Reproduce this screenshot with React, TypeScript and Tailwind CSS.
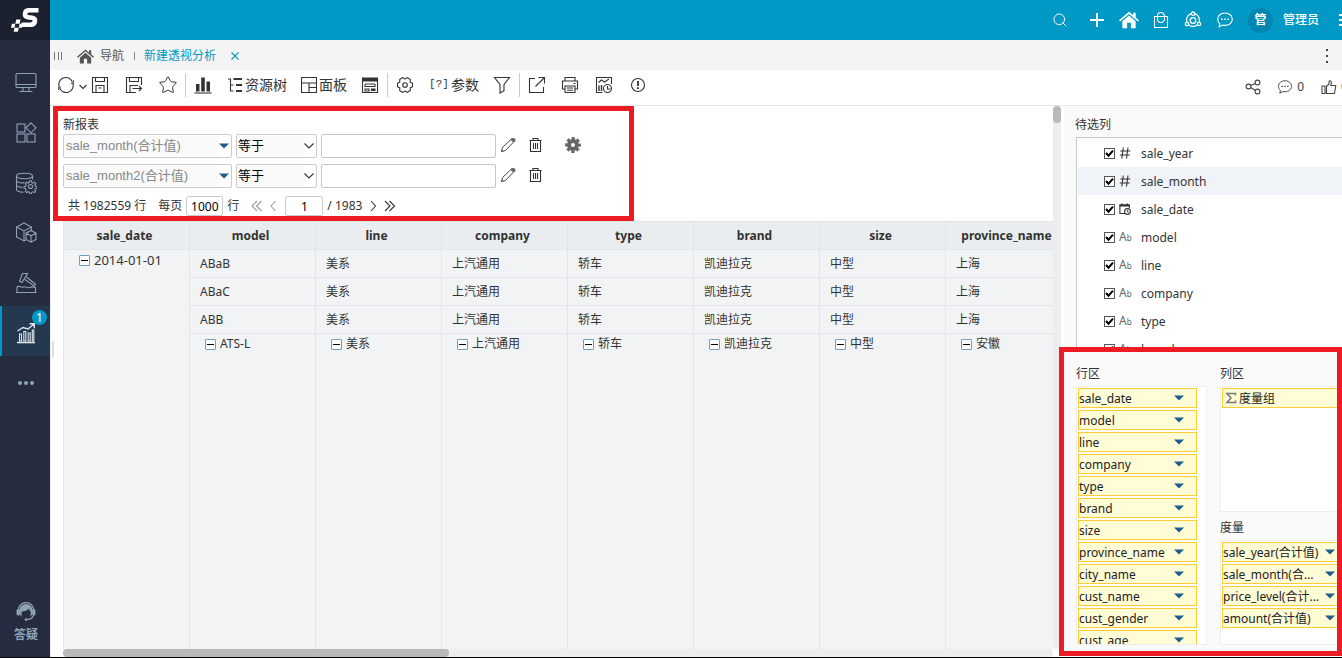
import type { ReactNode } from "react";
import clsx from "clsx";
import { Search, Star } from "lucide-react";

type IconProps = { children: ReactNode; box?: number; className?: string; sw?: number };

function Icon({ children, box = 18, className = "size-[18px]", sw = 1.1 }: IconProps) {
  return (
    <svg viewBox={`0 0 ${box} ${box}`} className={clsx("shrink-0", className)} fill="none" stroke="currentColor" strokeWidth={sw} aria-hidden="true">
      {children}
    </svg>
  );
}

const HomeIcon = ({ className }: { className: string }) => (
  <Icon className={className}>
    <path d="M9 1.5 0 9.3l1 1.1 8-6.9 8 6.9 1-1.1-3-2.6V2.5h-2.3v2.2zM3 10.200V16.500h4.300V11.500h3.400v5H15v-6.300L9 5z" fill="currentColor" stroke="none" />
  </Icon>
);

const ChatIcon = ({ className }: { className?: string }) => (
  <Icon className={className}>
    <path d="M9 2c4.300 0 7.300 2.700 7.300 6.200S13.300 14.400 9 14.400c-.9 0-1.700-.1-2.500-.3L3.200 16l.6-3.200C2.400 11.700 1.700 10 1.700 8.200 1.700 4.700 4.700 2 9 2z" />
    <path d="M5 7.600h1.600v1.500H5zM8.200 7.600h1.600v1.500H8.200zM11.400 7.600H13v1.500h-1.600z" fill="currentColor" stroke="none" />
  </Icon>
);

const Caret = () => (
  <svg viewBox="0 0 10 6" className="h-1.5 w-2.5 shrink-0" aria-hidden="true">
    <path d="M0 .5h10L5 5.500z" fill="#1c5d8c" />
  </svg>
);

const sideItems = [
  {
    label: "大屏",
    icon: <><rect x="1" y="1.500" width="20" height="14" rx="1" /><path d="M1 12.500h20M8 15.500v3.500m6-3.500v3.500M4.500 19.500h13" /></>,
  },
  {
    label: "应用",
    icon: <><rect x="2" y="2" width="8" height="8" /><rect x="2" y="12" width="8" height="8" /><rect x="12" y="12" width="8" height="8" /><path d="m16 .8 5 5-5 5-5-5z" /></>,
  },
  {
    label: "数据源",
    icon: <><ellipse cx="9.500" cy="4" rx="8" ry="2.700" /><path d="M1.500 4v13.500c0 1.500 3 2.600 7 2.800M17.500 4v3.500M1.500 8.500c.3 1.400 3.500 2.500 8 2.400M1.500 13c.2 1.300 2.700 2.300 6 2.500" /><circle cx="15.500" cy="14.500" r="2" /><path d="m14.600 8.800 1.800 0 .4 1.700 1.300.6 1.500-.9 1.200 1.300-.9 1.500.5 1.300 1.600.4v1.500l-1.700.5-.5 1.200.8 1.500-1.200 1.200-1.500-.8-1.200.5-.4 1.500h-1.700l-.4-1.600-1.300-.5-1.500.9-1.100-1.200.8-1.500-.5-1.200-1.500-.5v-1.500l1.600-.4.5-1.300-.8-1.500 1.100-1.200 1.500.8 1.200-.5z" /></>,
  },
  {
    label: "模型",
    icon: <><path d="m9 1 7.500 4v4M9 1 1.500 5v10L9 19l2-1M1.500 5 9 9l7.500-4M9 9v10" /><path d="m16 8.500 5 2.700v6.300l-5 2.700-5-2.700v-6.300zM11 11.200l5 2.600 5-2.600M16 13.800v6.400" /></>,
  },
  {
    label: "挖掘",
    icon: <><path d="M7.500 1.500h5L7 10.500 4.500 9.200zM11.500 5l9 7.200-1.200 1.800-9.500-6.500" /><path d="M2 20.500V15c2.500-2 4 1 6.500 0s3.500 1.500 6 .5 4-1 6 0v5zM1 20.500h20.500" /></>,
  },
];

function Sidebar() {
  return (
    <nav className="flex w-[50px] shrink-0 flex-col bg-[#262c3f] text-[#8fa3b5]">
      <a href="#" aria-label="Smartbi" className="flex h-10 items-center justify-center bg-[#1c2130]">
        <svg viewBox="0 0 28 26" className="h-[26px] w-7" aria-hidden="true">
          <path d="M27.500 3.300H18.500c-3 0-4.300 1.200-4.500 3.400-.2 2.100.9 3.100 3 3.500l4 .6c2.300.4 3.200 1.500 2.900 3.600s-1.700 3.400-4.400 3.400H10.500" fill="none" stroke="#fff" strokeWidth="4.600" />
          <path d="M5.200 12.500h4.300L8.600 16.800H4.300zM.9 16.800h3.400l-.8 4H0zM8.600 16.800H12l-1 4H7.800zM3.500 20.800h4.300l-.9 4H2.700z" fill="#fff" />
        </svg>
      </a>
      <ul className="mt-4">
        {sideItems.map((item) => (
          <li key={item.label}>
            <button type="button" aria-label={item.label} className="flex h-[50px] w-full items-center justify-center pt-1 pl-0.5">
              <Icon box={22} className="size-[22px]">{item.icon}</Icon>
            </button>
          </li>
        ))}
        <li className="relative">
          <button type="button" aria-label="分析" className="flex h-[50px] w-full items-center justify-center border-l-2 border-[#0099c5] bg-[#243850] text-[#dfe5ea]">
            <Icon box={22} className="mt-1 size-[22px]">
              <path d="M2 20.500h18" strokeWidth="1.600" />
              <path d="M4.500 19v-7h2v7zM8.800 19v-9.500h2V19zM13.200 19v-8h2v8zM17.300 19V8h1.500v11z" />
              <path d="m2.500 9 5.500-3.500 5 1.500L19 2M14.500 1.800h4.800v4.500" strokeWidth="1.400" />
            </Icon>
          </button>
          <span className="absolute top-1 right-[3px] flex size-[15px] items-center justify-center rounded-full bg-[#0099c5] text-xs text-white">1</span>
        </li>
        <li>
          <button type="button" aria-label="更多" className="flex h-[50px] w-full items-center justify-center gap-0.5 pt-1 pl-0.5">
            <span className="size-1 rounded-full bg-current" />
            <span className="size-1 rounded-full bg-current" />
            <span className="size-1 rounded-full bg-current" />
          </button>
        </li>
      </ul>
      <button type="button" className="mt-auto flex flex-col items-center gap-1 pb-3 pl-0.5 text-xs leading-5 font-bold">
        <Icon className="size-5" sw={1.200}>
          <path d="M2 8.500a7 7 0 0 1 14 0" />
          <path d="M9 2.800a6 6 0 0 0-6 6c0 3 .8 4.700 2.500 5.700C4.800 13 4.800 11 5.200 9.500c2.800-.1 5-1 6.600-2.800.2 1.500.8 2.300 1.500 3 .2 1.900-.2 3.500-1 4.800 1.800-1 2.700-2.900 2.700-5.700a6 6 0 0 0-6-6z" fill="currentColor" stroke="none" />
          <rect x=".5" y="7.500" width="3" height="5.500" rx="1.300" fill="currentColor" stroke="none" />
          <rect x="14.500" y="7.500" width="3" height="5.500" rx="1.300" fill="currentColor" stroke="none" />
          <path d="M16 12.500c-.7 2.500-3 4-6 4.200" />
          <circle cx="9" cy="16.700" r="1.200" fill="currentColor" stroke="none" />
        </Icon>
        答疑
      </button>
    </nav>
  );
}

function TopBar() {
  return (
    <header className="flex h-10 shrink-0 items-center justify-end bg-[#0099c5] text-white">
      <button type="button" aria-label="搜索" className="mr-5"><Search className="size-4" strokeWidth={1.400} /></button>
      <div className="flex items-center gap-3.5">
        <button type="button" aria-label="新建"><Icon sw={2}><path d="M9 2v14M2 9h14" /></Icon></button>
        <button type="button" aria-label="首页"><HomeIcon className="-mx-px size-5" /></button>
        <button type="button" aria-label="商城">
          <Icon><path d="M2.500 5.500h13v11h-13zM5.500 9V5a3.500 3.500 0 0 1 7 0v4M5.500 8a3.500 3.500 0 0 0 7 0" /></Icon>
        </button>
        <button type="button" aria-label="社区">
          <Icon sw={1.300}>
            <circle cx="9" cy="9" r="6.500" /><circle cx="9" cy="9.500" r="2.800" />
            <circle cx="9" cy="2.700" r="1.700" fill="#0099c5" /><circle cx="3" cy="13" r="1.700" fill="#0099c5" /><circle cx="15" cy="13" r="1.700" fill="#0099c5" />
          </Icon>
        </button>
        <button type="button" aria-label="消息"><ChatIcon /></button>
      </div>
      <span className="ml-3.5 flex size-[25px] items-center justify-center rounded-full bg-[#0086b0] text-xs font-bold">管</span>
      <button type="button" className="ml-2.5 text-xs font-medium">管理员</button>
      <button type="button" aria-label="菜单" className="ml-5 flex w-[3px] flex-col gap-[3px] overflow-hidden">
        <span className="h-0.5 w-3.5 bg-white" />
        <span className="h-0.5 w-3.5 bg-white" />
        <span className="h-0.5 w-3.5 bg-white" />
      </button>
    </header>
  );
}

function TabBar() {
  return (
    <div className="flex h-[30px] shrink-0 items-center bg-[#f4f4f4] pt-0.5 pl-1 text-xs text-[#555]">
      <span className="flex h-2 w-2 justify-between">
        <span className="w-px bg-[#777]" />
        <span className="w-px bg-[#777]" />
        <span className="w-px bg-[#777]" />
      </span>
      <a href="#" className="ml-[15px] flex items-center gap-1.5">
        <HomeIcon className="size-[17px]" />
        导航
      </a>
      <span className="mr-[9px] ml-2.5 h-2 w-px bg-[#888]" />
      <a href="#" className="text-[#0099c5]">新建透视分析</a>
      <button type="button" aria-label="关闭" className="ml-[15px] text-[#0099c5]">
        <Icon box={8} className="size-2"><path d="m.5.5 7 7m0-7-7 7" /></Icon>
      </button>
      <button type="button" aria-label="更多" className="mr-3.5 ml-auto flex flex-col gap-1">
        <span className="size-0.5 bg-[#444]" />
        <span className="size-0.5 bg-[#444]" />
        <span className="size-0.5 bg-[#444]" />
      </button>
    </div>
  );
}

function Tool({ label, text, divided, children }: { label: string; text?: boolean; divided?: boolean; children: ReactNode }) {
  return (
    <button
      type="button"
      aria-label={label}
      className={clsx("flex h-6 shrink-0 items-center", text ? "gap-0.5 pr-1.5 pl-2 text-sm" : "w-[34px] justify-center", divided && "border-l border-[#ccc]")}
    >
      {children}
      {text && label}
    </button>
  );
}

function Toolbar() {
  return (
    <div className="flex h-9 shrink-0 items-center border-b border-[#e6e6e6] bg-white pb-[5px] pl-[7px] text-[#333]">
      <button type="button" aria-label="刷新" className="flex w-[26px] items-center gap-1">
        <Icon><path d="M2 10.500A7 7 0 0 1 15.500 6.500M16 7.500A7 7 0 0 1 2.500 11.500" /><path d="M16.500 4v3.500h-2.500M1.500 14v-3h2.500" strokeWidth=".8" /></Icon>
        <Icon box={8} className="mt-1 size-2"><path d="m.5 2 3.500 3.500L7.500 2" /></Icon>
      </button>
      <Tool label="保存"><Icon><path d="M1.500 1.500h15v15h-15zM4.500 1.500v4h9v-4M5 16.500v-7h8v7M7.500 12h3" /></Icon></Tool>
      <Tool label="另存为"><Icon><path d="M16.500 9V1.500h-15v15H11M4.500 1.500v4h9v-4M5 16.500v-7h8M7.500 12.500h9M14 10l2.500 2.500L14 15" /></Icon></Tool>
      <Tool label="收藏"><Star className="size-5" strokeWidth={1.200} /></Tool>
      <Tool label="图表" divided>
        <Icon><path d="M2 8h3.500v7.500H2zM7.200 1.500h3.600v14H7.200zM12.500 5.500H16v10h-3.500z" fill="currentColor" stroke="none" /><path d="M.5 17h17" /></Icon>
      </Tool>
      <Tool label="资源树" text>
        <Icon box={16} className="size-4"><path d="M3.500 1.500v13M1 2h3M3.500 8h3M3.500 14h3" /><path d="M6.500 2H15M9 8h6M9 14h6" strokeWidth="2" /></Icon>
      </Tool>
      <Tool label="面板" text>
        <Icon box={16} className="size-4"><path d="M.5.500h15v15H.5zM.5 6h15M8 6v9.500M8 10.500h7.500" /></Icon>
      </Tool>
      <Tool label="表单"><Icon><path d="M1.500 2.500h15v14h-15zM4 8h10M4 8v2.500h10V8M4 13h4v2H4z" /><path d="M1 1.500h16v4H1zM10 12.500h4.500V15H10z" fill="currentColor" stroke="none" /></Icon></Tool>
      <Tool label="设置" divided>
        <Icon>
          <path d="M16.500 7.200v3.600l-2.300 1 .1 2.800-3.100 1.800L9 15l-2.200 1.400-3.100-1.800.1-2.800-2.300-1V7.200l2.300-1-.1-2.800 3.100-1.800L9 3l2.200-1.400 3.100 1.800-.1 2.800z" strokeLinejoin="round" />
          <circle cx="9" cy="9" r="2.300" />
        </Icon>
      </Tool>
      <Tool label="参数" text>
        <span className="w-5 font-['Liberation_Mono',monospace] text-[11px]" aria-hidden="true">[?]</span>
      </Tool>
      <Tool label="筛选"><Icon><path d="M1.500 1.500h15L11 8.500v6.200L7 17V8.500z" /></Icon></Tool>
      <Tool label="导出" divided><Icon><path d="M7 2.500H1.500v14h14V11M10.500 1.500h6v6M16.500 1.500 7.500 10.500" /></Icon></Tool>
      <Tool label="打印">
        <Icon><path d="M4 5V1.500h10V5M4 13H1.500V5h15v8H14M4 10h10v6.500H4zM6 12h6M6 14.300h6M12.500 7.500h2" /></Icon>
      </Tool>
      <Tool label="定时">
        <Icon><path d="M7.500 16.500h-6v-15h15V8M3.500 6.500l3-2.500 3 2 4.500-3" /><path d="M4 15V9.500M6.500 15V9" strokeWidth="1.400" /><circle cx="12.500" cy="12.500" r="4" /><path d="M12.500 10v3h3" /></Icon>
      </Tool>
      <Tool label="提示"><Icon box={16} className="size-4"><circle cx="8" cy="8" r="6.500" /><path d="M8 4v5M8 10.300v1.700" strokeWidth="1.800" /></Icon></Tool>
      <div className="ml-auto flex items-center pt-1 text-xs text-[#444]">
        <button type="button" aria-label="分享">
          <Icon box={16} className="size-4"><circle cx="3.500" cy="7.500" r="2.400" /><circle cx="12.500" cy="3.500" r="2.400" /><circle cx="12.500" cy="12.500" r="2.400" /><path d="m5.700 6.500 4.600-2M5.600 8.600l4.700 2.700" /></Icon>
        </button>
        <button type="button" aria-label="评论" className="ml-4 flex items-center gap-1"><ChatIcon className="size-4" />0</button>
        <button type="button" aria-label="点赞" className="ml-[17px] flex w-[21px] items-center gap-1 overflow-hidden">
          <Icon box={16} className="size-4"><path d="M1 7h3v7.500H1zM5.500 7.500 8 5V2.500c0-1 2-1 2.300.5.200 1.200-.2 2.500-.5 3.500h5l-1.300 8h-8z" /></Icon>
          0
        </button>
      </div>
    </div>
  );
}

const filters = ["sale_month(合计值)", "sale_month2(合计值)"];

function FilterRow({ field, last }: { field: string; last?: boolean }) {
  return (
    <div className="flex items-center gap-1 font-['Liberation_Sans','Noto_Sans_CJK_SC',sans-serif] text-[13px]">
      <div className="flex h-6 w-[169px] items-center rounded-xs border border-[#ccc] bg-white pr-0.5">
        <select aria-label="筛选字段" className="h-5 flex-1 appearance-none bg-[#fafafa] pl-0.5 text-[#888]">
          <option>{field}</option>
        </select>
        <Caret />
      </div>
      <div className="flex h-6 w-[81px] items-center rounded-xs border border-[#ccc] bg-white pr-0.5">
        <select aria-label={`${field} 条件`} className="h-5 min-w-0 flex-1 appearance-none bg-[#fafafa] pl-px text-black">
          <option>等于</option>
          <option>不等于</option>
        </select>
        <Icon box={10} className="size-2.5"><path d="m.5 2.500 4.500 4.500 4.500-4.500" /></Icon>
      </div>
      <input aria-label={`${field} 值`} className="h-6 w-[175px] rounded-xs border border-[#c8c4c0] bg-white px-1" />
      <div className="flex items-center gap-3 pb-0.5 text-[#333]">
        <button type="button" aria-label="编辑">
          <Icon box={16} className="size-4"><path d="m1.500 14.500 1-4L12 1.500l2.500 2.500L5.500 13.500z" strokeWidth=".9" /><path d="m10.500 3 2-2h1.500l1.500 1.500V4l-2 1.500zM1.200 15l.6-2.500 2 1.900z" fill="#666" stroke="none" /></Icon>
        </button>
        <button type="button" aria-label="删除">
          <Icon box={16} className="size-4"><path d="M1.500 3.500h12M5 3V1.500h5V3M2.500 3.500v11h10v-11M5.500 6v6M7.500 6v6M9.500 6v6" /></Icon>
        </button>
        {!last && (
          <button type="button" aria-label="筛选设置" className="ml-[9px] text-[#666]">
            <Icon box={16} className="size-4"><circle cx="8" cy="8" r="4" strokeWidth="4" /><circle cx="8" cy="8" r="6.600" strokeWidth="2.600" strokeDasharray="3.200 1.984" strokeDashoffset="1.600" /></Icon>
          </button>
        )}
      </div>
    </div>
  );
}

function Pager() {
  return (
    <div className="mt-2 flex h-5 items-center pl-[5px] text-xs">
      <span>共 1982559 行</span>
      <label className="ml-3 flex items-center gap-1">
        每页
        <input defaultValue="1000" className="h-5 w-[37px] rounded-xs border border-[#ccc] text-center text-black" />
        行
      </label>
      <button type="button" aria-label="首页" className="ml-3 text-[#999]"><Icon box={12} className="size-3"><path d="M6 1 1 6l5 5M10.500 1l-5 5 5 5" /></Icon></button>
      <button type="button" aria-label="上一页" className="ml-1 text-[#999]"><Icon box={12} className="size-3"><path d="M8.500 1 4 6l4.500 5" /></Icon></button>
      <input aria-label="页码" defaultValue="1" className="ml-1.5 h-5 w-[38px] rounded-xs border border-[#ccc] text-center text-black" />
      <span className="ml-1">/ 1983</span>
      <button type="button" aria-label="下一页" className="ml-1.5"><Icon box={12} className="size-3"><path d="M3 1l4.500 5L3 11" /></Icon></button>
      <button type="button" aria-label="末页" className="ml-1"><Icon box={12} className="size-3"><path d="m1 1 5 5-5 5M5.500 1l5 5-5 5" /></Icon></button>
    </div>
  );
}

const columns = ["sale_date", "model", "line", "company", "type", "brand", "size", "province_name"];
const rows = [
  ["ABaB", "美系", "上汽通用", "轿车", "凯迪拉克", "中型", "上海"],
  ["ABaC", "美系", "上汽通用", "轿车", "凯迪拉克", "中型", "上海"],
  ["ABB", "美系", "上汽通用", "轿车", "凯迪拉克", "中型", "上海"],
];
const groupRow = ["ATS-L", "美系", "上汽通用", "轿车", "凯迪拉克", "中型", "安徽"];

function GroupCell({ text }: { text: string }) {
  return (
    <div className="flex items-center gap-1 pl-[15px] leading-5">
      <button type="button" aria-label={`收起 ${text}`} className="flex size-[11px] items-center justify-center rounded-[1px] border border-[#6f9fbd] bg-white">
        <span className="h-px w-[7px] bg-black" />
      </button>
      {text}
    </div>
  );
}

function PivotTable() {
  return (
    <div className="mt-[5px] min-h-0 flex-1 overflow-hidden">
      <table className="h-full w-[1009px] table-fixed border-separate border-spacing-0 border-t border-l border-[#dfe5e8] bg-[#f2f3f5] text-xs text-[#333]">
        <thead>
          <tr>
            {columns.map((c) => (
              <th key={c} className="h-7 w-[126px] border-r border-b border-[#dfe5e8] bg-[#e9edf0] pr-1 font-bold">{c}</th>
            ))}
          </tr>
        </thead>
        <tbody>
          {rows.map((row, i) => (
            <tr key={row[0]}>
              {i === 0 && (
                <td rowSpan={4} className="border-r border-[#e2e5e8] align-top text-[13px]"><GroupCell text="2014-01-01" /></td>
              )}
              {row.map((cell, j) => (
                <td key={j} className="h-7 border-r border-b border-[#e2e5e8] px-2.5">{cell}</td>
              ))}
            </tr>
          ))}
          <tr>
            {groupRow.map((cell, j) => (
              <td key={j} className="border-r border-[#e2e5e8] align-top"><GroupCell text={cell} /></td>
            ))}
          </tr>
        </tbody>
      </table>
    </div>
  );
}

const fields = [
  { name: "sale_year", type: "number" },
  { name: "sale_month", type: "number" },
  { name: "sale_date", type: "date" },
  { name: "model", type: "text" },
  { name: "line", type: "text" },
  { name: "company", type: "text" },
  { name: "type", type: "text" },
  { name: "brand", type: "text" },
];

function TypeIcon({ type }: { type: string }) {
  if (type === "number") {
    return <Icon box={12} className="size-3"><path d="M4.300.5 2.800 11.500M9 .5 7.500 11.500M1.300 4h10M.8 8h10" /></Icon>;
  }
  if (type === "date") {
    return (
      <Icon box={12} className="size-3">
        <path d="M6 10.500H.9V2h9.500v3" /><path d="M.5 1.500h10.300v2H.5zM2 .5h1.500v1H2zM7.500.500H9v1H7.500z" fill="currentColor" stroke="none" /><circle cx="8.500" cy="8.500" r="2.900" /><path d="M8.500 7v2h1.500" strokeWidth=".8" />
      </Icon>
    );
  }
  return <span className="flex w-3 items-baseline text-xs leading-3 text-[#666]" aria-hidden="true">A<span className="text-[8px]">b</span></span>;
}

function FieldList() {
  return (
    <ul className="ml-3 min-h-0 flex-1 overflow-hidden border-t border-l border-[#c8c8c8] bg-white pt-px pl-px">
      {fields.map((f) => (
        <li key={f.name} className={f.name === "sale_month" ? "bg-[#f0f4f8]" : ""}>
          <label className="flex h-7 items-center pl-[26px]">
            <span className="grid size-[11px] place-items-center">
              <input type="checkbox" defaultChecked className="peer col-start-1 row-start-1 size-[11px] appearance-none border border-[#555] bg-white" />
              <svg viewBox="0 0 9 9" className="pointer-events-none invisible col-start-1 row-start-1 size-[9px] peer-checked:visible" aria-hidden="true">
                <path d="m1 4 2.500 2.700L8 1.700" fill="none" stroke="#000" strokeWidth="2" />
              </svg>
            </span>
            <span className="ml-1 flex"><TypeIcon type={f.type} /></span>
            <span className="ml-2.5 pt-0.5">{f.name}</span>
          </label>
        </li>
      ))}
    </ul>
  );
}

const rowFields = ["sale_date", "model", "line", "company", "type", "brand", "size", "province_name", "city_name", "cust_name", "cust_gender", "cust_age"];
const measures = ["sale_year(合计值)", "sale_month(合计值)", "price_level(合计值)", "amount(合计值)"];

function Chip({ text, wide }: { text: string; wide?: boolean }) {
  return (
    <li className={clsx("flex h-5 w-[119px] items-center border border-[#fc3] bg-[#fffcd6] text-[#222]", wide ? "pr-[5px]" : "pr-3")}>
      <span className="flex-1 truncate pt-0.5">{text}</span>
      <button type="button" aria-label={`${text} 菜单`} className="pl-1"><Caret /></button>
    </li>
  );
}

function DropZones() {
  return (
    <div className="flex h-[306px] shrink-0 gap-[13px] pt-3 pb-3 pl-3">
      <section className="flex w-[131px] shrink-0 flex-col">
        <h3 className="h-[23px] pt-px leading-5">行区</h3>
        <ul className="flex min-h-0 flex-1 flex-col gap-0.5 overflow-hidden border border-[#eee] bg-white p-px *:shrink-0">
          {rowFields.map((f) => <Chip key={f} text={f} />)}
        </ul>
      </section>
      <section className="flex min-w-0 flex-1 flex-col overflow-hidden">
        <h3 className="h-[23px] pt-px leading-5">列区</h3>
        <ul className="h-[126px] border border-[#eee] bg-white p-px">
          <li className="flex h-5 w-[119px] items-center gap-0.5 border border-[#fc3] bg-[#fffcd6] pl-0.5 text-[#222]">
            <Icon box={12} className="size-3 text-[#777]" sw={1.500}><path d="M10.500 3.500V1.500H2L6 6 2 10.500h8.500v-2" /></Icon>
            <span className="pt-0.5">度量组</span>
          </li>
        </ul>
        <h3 className="mt-[5px] h-[23px] pt-px leading-5">度量</h3>
        <ul className="flex min-h-0 flex-1 flex-col gap-0.5 border border-[#eee] bg-white p-px">
          {measures.map((m) => <Chip key={m} text={m} wide />)}
        </ul>
      </section>
    </div>
  );
}

export default function App() {
  return (
    <div className="relative flex h-screen overflow-hidden border-b border-black bg-white font-['Noto_Sans','Noto_Sans_CJK_SC',sans-serif] text-xs text-[#333]">
      <Sidebar />
      <div className="flex min-w-0 flex-1 flex-col">
        <TopBar />
        <TabBar />
        <Toolbar />
        <div className="flex min-h-0 flex-1">
          <main className="flex min-w-0 flex-1 flex-col border-l border-[#eee] pl-3">
            <div className="flex min-h-0 flex-1">
              <div className="flex min-w-0 flex-1 flex-col pt-2.5">
                <h2 className="h-[18px] leading-[18px]">新报表</h2>
                <div className="flex flex-col gap-1.5">
                  {filters.map((f, i) => <FilterRow key={f} field={f} last={i === filters.length - 1} />)}
                </div>
                <Pager />
                <PivotTable />
              </div>
              <div className="w-2 rounded-full bg-[#ededed]">
                <div className="h-[17px] rounded-full bg-[#b9b9b9]" />
              </div>
            </div>
            <div className="mr-2 h-2 rounded-full bg-[#ededed]">
              <div className="h-2 w-[39%] rounded-full bg-[#b9b9b9]" />
            </div>
          </main>
          <aside className="ml-[3px] flex w-[278px] shrink-0 flex-col overflow-hidden bg-[#fafafa]">
            <h2 className="mt-2.5 h-[21px] pl-[11px] leading-[18px]">待选列</h2>
            <FieldList />
            <DropZones />
          </aside>
        </div>
      </div>
      <span className="absolute top-[341px] left-[52px] h-4 w-0.5 bg-[#ddd]" />
      <div className="pointer-events-none absolute top-[106px] left-[53px] h-[115px] w-[581px] border-5 border-[#ed1c24]" />
      <div className="pointer-events-none absolute right-0 bottom-px h-[309px] w-[283px] border-5 border-[#ed1c24]" />
    </div>
  );
}
